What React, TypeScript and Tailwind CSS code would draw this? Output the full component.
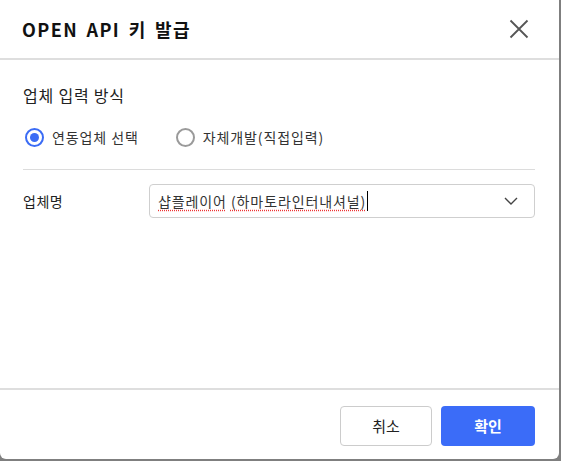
import React from "react";

export default function App() {
  const font = { fontFamily: '"Noto Sans CJK KR", "Noto Sans", sans-serif' };
  return (
    <div className="w-[561px] h-[461px] bg-[#7f7f7f] overflow-hidden" style={font}>
      <div className="w-[559px] h-[459px] bg-white rounded-b-[6px] flex flex-col">
        <div className="h-[60px] flex items-center justify-between pl-[22px] pr-[30px] border-b-2 border-[#dedede] shrink-0">
          <div className="text-[18px] font-bold text-[#111] tracking-[1.4px] [word-spacing:3px]">OPEN API 키 발급</div>
          <svg width="20" height="20" viewBox="0 0 20 20" className="text-[#555]">
            <path d="M1.5 1.5 L18.5 18.5 M18.5 1.5 L1.5 18.5" stroke="currentColor" strokeWidth="1.8" fill="none" />
          </svg>
        </div>
        <div className="flex-1 px-[23px] pt-[24px]">
          <div className="text-[16px] text-[#222] leading-[22px] tracking-[0.8px]">업체 입력 방식</div>
          <div className="flex items-center mt-[20px] h-[22px] text-[14px] text-[#333] tracking-[0.9px]">
            <span className="w-[19px] h-[19px] rounded-full border-2 border-[#3b6cf5] flex items-center justify-center ml-[2px]">
              <span className="w-[9px] h-[9px] rounded-full bg-[#3b6cf5]" />
            </span>
            <span className="ml-[8px]">연동업체 선택</span>
            <span className="w-[19px] h-[19px] rounded-full border-2 border-[#9a9a9a] ml-[37px]" />
            <span className="ml-[8px]">자체개발(직접입력)</span>
          </div>
          <div className="h-px bg-[#dcdcdc] mt-[21px] w-[512px]" />
          <div className="flex items-center mt-[14px]">
            <div className="w-[126px] text-[14px] text-[#222] tracking-[0.5px]">업체명</div>
            <div className="w-[386px] h-[34px] border border-[#cfcfcf] rounded-[4px] flex items-center pl-[8px] pr-[16px] justify-between">
              <div className="flex items-center text-[14px] text-[#333] tracking-[0.9px]">
                <span className="underline decoration-dotted decoration-[#e33] underline-offset-[3px]">샵플레이어</span>
                <span className="whitespace-pre"> </span>
                <span className="underline decoration-dotted decoration-[#e33] underline-offset-[3px]">(하마토라인터내셔널)</span>
                <span className="w-px h-[20px] bg-black ml-[1px]" />
              </div>
              <svg width="14" height="8" viewBox="0 0 14 8">
                <path d="M1 1 L7 7 L13 1" stroke="#444" strokeWidth="1.4" fill="none" />
              </svg>
            </div>
          </div>
        </div>
        <div className="h-[71px] border-t-2 border-[#dedede] flex items-start justify-end pt-[16px] pr-[24px] gap-[9px] shrink-0">
          <button className="w-[92px] h-[40px] border border-[#cccccc] rounded-[4px] bg-white text-[15px] text-[#222]">취소</button>
          <button className="w-[94px] h-[40px] rounded-[4px] bg-[#3b6cf8] text-[15px] font-bold text-white">확인</button>
        </div>
      </div>
    </div>
  );
}
